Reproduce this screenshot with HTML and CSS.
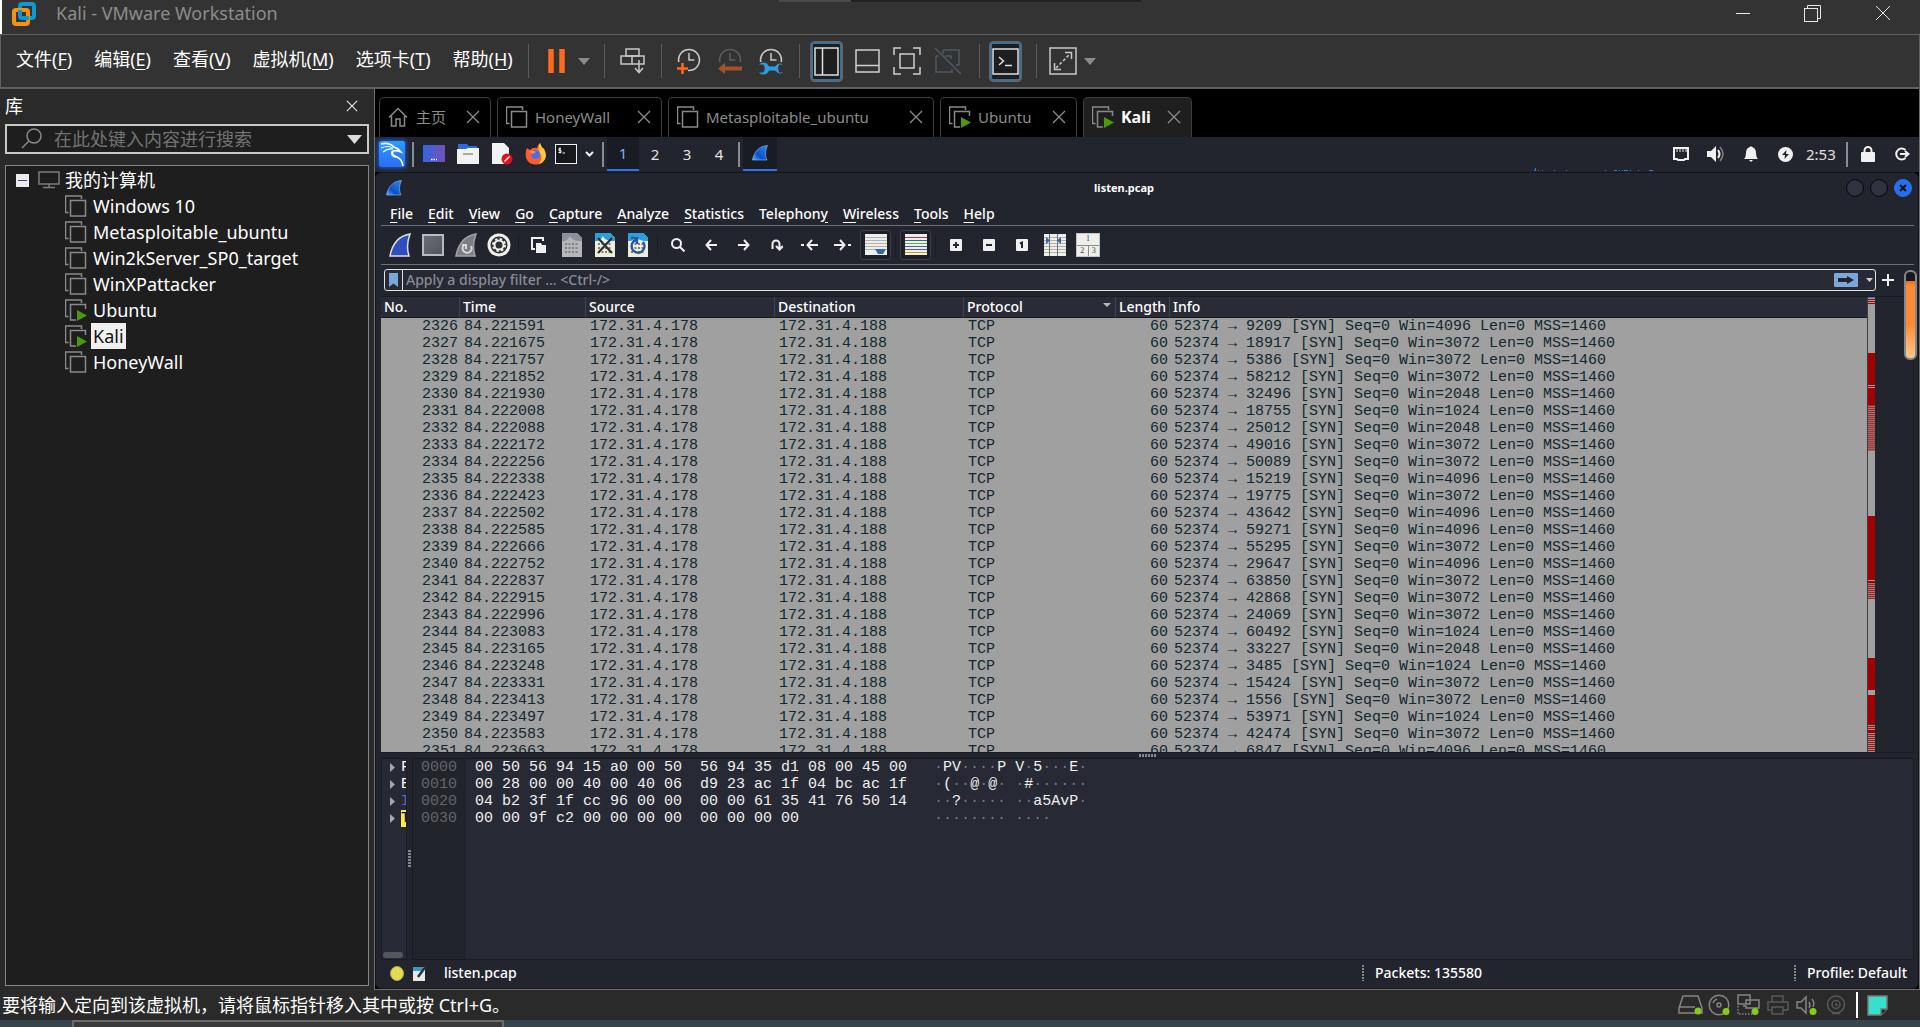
FILE: index.html
```html
<!DOCTYPE html>
<html lang="zh-CN">
<head>
<meta charset="utf-8">
<title>Kali - VMware Workstation</title>
<link rel="stylesheet" href="styles.css">
</head>
<body>
<svg class="defs" aria-hidden="true">
  <defs>
    <linearGradient id="finBlue" x1="0" y1="1" x2="1" y2="0"><stop offset="0" stop-color="#5aa8ff"/><stop offset=".35" stop-color="#0b50c8"/><stop offset="1" stop-color="#2a8cf0"/></linearGradient>
    <linearGradient id="purple" x1="0" y1="0" x2="1" y2="0"><stop offset="0" stop-color="#3566e0"/><stop offset="1" stop-color="#7350b8"/></linearGradient>
    <linearGradient id="grayBox" x1="0" y1="0" x2="1" y2="1"><stop offset="0" stop-color="#6b6d75"/><stop offset="1" stop-color="#53555c"/></linearGradient>
    <pattern id="stripe" width="7" height="2" patternUnits="userSpaceOnUse"><rect width="7" height="1" fill="#a40000"/><rect y="1" width="7" height="1" fill="#a0a0a0"/></pattern>
    <symbol id="vm" viewBox="0 0 22 22"><path d="M3.500 17.500H.5V1H16.500V4" fill="none" stroke="#8a8a8a" stroke-width="1.500"/><rect x="5.500" y="5.500" width="15" height="15.500" fill="none" stroke="#8a8a8a" stroke-width="1.500"/></symbol>
    <symbol id="vmOn" viewBox="0 0 22 22"><path d="M3.500 17.500H.5V1H16.500V4M11 21H5.500V5.500H20.500V10" fill="none" stroke="#8a8a8a" stroke-width="1.500"/><path d="M12 11 22 16.500 12 22Z" fill="#4a9a0c"/></symbol>
    <symbol id="x" viewBox="0 0 14 14"><path d="M1 1 13 13M13 1 1 13" fill="none" stroke="currentColor" stroke-width="1.300"/></symbol>
    <symbol id="fin" viewBox="0 0 16 16"><path d="M.5 15C2 7 7 1 15.500.500C13 6 13 11 15 15Z" fill="url(#finBlue)" stroke="#8cc0f4" stroke-width=".6"/></symbol>
    <symbol id="clock" viewBox="0 0 26 26"><circle cx="13" cy="13" r="10.500" fill="none" stroke="currentColor" stroke-width="1.500"/><path d="M13 6V13H18.500" fill="none" stroke="currentColor" stroke-width="1.500"/></symbol>
    <symbol id="doc" viewBox="0 0 20 24"><path d="M0 0H15L20 5V24H0Z" fill="var(--paper)"/><path d="M0 0H15L20 5V8H0Z" fill="var(--band)"/><path d="M3 8Q7 6 8 3Q9 7 16 8Z" fill="var(--paper)"/><path d="M3 11H17M3 15H17M3 19H17" stroke="#7e8084" stroke-width="2" stroke-dasharray="2 1.500"/></symbol>
  </defs>
</svg>

<header class="titlebar">
  <svg class="logo" width="24" height="24" viewBox="0 0 24 24" fill="none" stroke-width="4"><rect x="8" y="2" width="14" height="14" rx="2" stroke="#0e97d0"/><rect x="2" y="8" width="14" height="14" rx="2" stroke="#f49214"/><path d="M8 12V8M12 16H17" stroke="#0e97d0"/></svg>
  <h1>Kali - VMware Workstation</h1>
  <div class="topedge"></div>
  <div class="winbtns">
    <button aria-label="最小化"><svg width="18" height="18" viewBox="0 0 18 18"><path d="M2 9.500H16" stroke="#e8e8e8"/></svg></button>
    <button aria-label="还原"><svg width="18" height="18" viewBox="0 0 18 18" fill="none" stroke="#e8e8e8"><rect x=".5" y="4.500" width="13" height="13"/><path d="M3.500 4V1.500H16.500V14.500H14"/></svg></button>
    <button aria-label="关闭"><svg width="18" height="18" viewBox="0 0 18 18"><path d="M2 2 16 16M16 2 2 16" stroke="#e8e8e8"/></svg></button>
  </div>
</header>

<div class="menubar">
  <nav class="menus">
    <button>文件(<u>F</u>)</button><button>编辑(<u>E</u>)</button><button>查看(<u>V</u>)</button><button>虚拟机(<u>M</u>)</button><button>选项卡(<u>T</u>)</button><button>帮助(<u>H</u>)</button>
  </nav>
  <i class="vsep"></i>
  <div class="group g-pause">
    <button aria-label="挂起"><svg width="18" height="24"><path d="M3 0V24M14 0V24" stroke="#ff6a1c" stroke-width="5.500"/></svg></button>
    <button aria-label="电源选项"><svg width="12" height="7"><path d="M0 0H12L6 7Z" fill="#8c8c8c"/></svg></button>
  </div>
  <i class="vsep"></i>
  <div class="group g-one"><button aria-label="发送 Ctrl+Alt+Del"><svg width="26" height="26" viewBox="0 0 26 26" fill="none" stroke="#c8c8c8" stroke-width="1.500"><rect x="6" y="1" width="13" height="7"/><rect x="1" y="8" width="11" height="8"/><path d="M12 8H24V16H12M19 12V24M15 20 19 24.500 23 20"/></svg></button></div>
  <i class="vsep"></i>
  <div class="group g-clock">
    <button aria-label="拍摄快照"><svg width="26" height="28" viewBox="0 0 26 28"><use href="#clock" width="26" height="26" color="#c8c8c8"/><path d="M0 15H12V28H0Z" fill="#333"/><path d="M1 21.500H12M6.500 16V27" stroke="#ff6a1c" stroke-width="2.500"/></svg></button>
    <button aria-label="恢复快照"><svg width="26" height="28" viewBox="0 0 26 28"><use href="#clock" width="26" height="26" color="#5c5c5c"/><path d="M0 15H26V28H0Z" fill="#333"/><path d="M1 21.500 8 16V19.500H25V23.500H8V27Z" fill="#a5522a"/></svg></button>
    <button aria-label="管理快照"><svg width="26" height="28" viewBox="0 0 26 28"><use href="#clock" width="26" height="26" color="#c8c8c8"/><path d="M0 15H26V28H0Z" fill="#333"/><path d="M1 17.500H5.500L7 21.500 5.500 25.500H1Q4 29 9 26.500L11 23.500H17Q21 28 25 25.500H21L20 21.500 21 17.500H25Q21 15 17 19.500H11L9 16.500Q4 14 1 17.500Z" fill="#2e9de0"/></svg></button>
  </div>
  <i class="vsep"></i>
  <div class="group g-view">
    <button class="on" aria-label="显示库"><svg width="25" height="29" fill="none" stroke="#e0e0e0" stroke-width="1.500"><rect x="1" y="1" width="23" height="27"/><path d="M8.500 1V28"/></svg></button>
    <button aria-label="显示缩略图"><svg width="25" height="28" fill="none" stroke="#d0d0d0" stroke-width="1.500"><rect x="1" y="3" width="23" height="22"/><path d="M1 18.500H24"/></svg></button>
    <button aria-label="全屏"><svg width="28" height="28" fill="none" stroke="#d0d0d0" stroke-width="1.500"><path d="M8 1H1V8M20 1H27V8M1 20V27H8M27 20V27H20"/><rect x="7" y="7" width="14" height="14"/></svg></button>
    <button aria-label="Unity"><svg width="28" height="28" fill="none" stroke="#4c5a66" stroke-width="1.500"><path d="M1 1 27 27M9 3H25V18H22M2 9H5M11 9H17V12M2 9V25H18V22M9 3V7"/></svg></button>
  </div>
  <i class="vsep"></i>
  <div class="group g-console"><button class="on" aria-label="控制台"><svg width="27" height="27" fill="none" stroke="#e0e0e0" stroke-width="1.500"><rect x="1" y="1" width="25" height="25"/><path d="M7 9 11.500 13 7 17M13 17.500H20"/></svg></button></div>
  <i class="vsep"></i>
  <div class="group g-pause g-stretch">
    <button aria-label="拉伸"><svg width="28" height="28" fill="none" stroke="#c8c8c8" stroke-width="1.500"><rect x="1" y="1" width="26" height="26"/><path d="M16 5.500H22.500V12M5.500 16V22.500H12"/><path d="M7 21 21 7" stroke-dasharray="3 2"/></svg></button>
    <button aria-label="拉伸选项"><svg width="12" height="7"><path d="M0 0H12L6 7Z" fill="#8c8c8c"/></svg></button>
  </div>
</div>

<div class="body">
  <aside class="library">
    <div class="lib-head"><h2>库</h2><button aria-label="关闭库"><svg width="12" height="12" color="#e6e6e6"><use href="#x"/></svg></button></div>
    <div class="search">
      <svg width="22" height="22" viewBox="0 0 22 22" fill="none" stroke="#8a8a8a" stroke-width="1.500"><circle cx="13" cy="8" r="7"/><path d="M8 13 1 20"/></svg>
      <input type="text" aria-label="搜索" placeholder="在此处键入内容进行搜索">
      <button aria-label="筛选"><svg width="15" height="9"><path d="M0 0H15L7.500 9Z" fill="#dcdcdc"/></svg></button>
    </div>
    <ul class="tree">
      <li class="root"><svg width="13" height="13"><rect width="13" height="13" fill="#ececec"/><path d="M2 6.500H11" stroke="#3a4a90"/></svg><svg width="22" height="18" fill="none" stroke="#7c7c7c" stroke-width="1.500"><rect x="1" y="1" width="20" height="12"/><path d="M11 13V16M5 16.500H17"/></svg><span>我的计算机</span></li>
      <li><svg><use href="#vm"/></svg><span>Windows 10</span></li>
      <li><svg><use href="#vm"/></svg><span>Metasploitable_ubuntu</span></li>
      <li><svg><use href="#vm"/></svg><span>Win2kServer_SP0_target</span></li>
      <li><svg><use href="#vm"/></svg><span>WinXPattacker</span></li>
      <li><svg><use href="#vmOn"/></svg><span>Ubuntu</span></li>
      <li><svg><use href="#vmOn"/></svg><span class="sel">Kali</span></li>
      <li><svg><use href="#vm"/></svg><span>HoneyWall</span></li>
    </ul>
  </aside>

  <main class="stage">
    <div class="tabs">
      <div class="tab t-home"><svg width="20" height="20" viewBox="0 0 20 20" fill="none" stroke="#8a8a8a" stroke-width="1.500"><path d="M1 10.500 10 1.500 19 10.500M3.500 9V19H8V12H12V19H16.500V9"/></svg><span>主页</span><button aria-label="关闭"><svg><use href="#x"/></svg></button></div>
      <div class="tab t-honey"><svg><use href="#vm"/></svg><span>HoneyWall</span><button aria-label="关闭"><svg><use href="#x"/></svg></button></div>
      <div class="tab t-meta"><svg><use href="#vm"/></svg><span>Metasploitable_ubuntu</span><button aria-label="关闭"><svg><use href="#x"/></svg></button></div>
      <div class="tab t-ubuntu"><svg><use href="#vmOn"/></svg><span>Ubuntu</span><button aria-label="关闭"><svg><use href="#x"/></svg></button></div>
      <div class="tab active"><svg><use href="#vmOn"/></svg><span>Kali</span><button aria-label="关闭"><svg><use href="#x"/></svg></button></div>
    </div>

    <div class="panel">
      <button class="kali" aria-label="Kali"><svg width="26" height="26" viewBox="0 0 26 26" fill="none" stroke="#fff"><path d="M2 3Q10 1 15 6Q19 7 22 11Q17 9 14 10Q12 14 18 16Q23 18 24 25" stroke-width="1.600"/><path d="M2 7Q9 4 14 7M4 11Q9 7 14 8M13 10Q11 15 17 16.500" stroke-width="1.200"/></svg></button>
      <i class="psep"></i>
      <div class="launch">
        <button aria-label="桌面"><svg width="22" height="18"><rect width="22" height="17" fill="url(#purple)"/><path d="M8 14.500H14" stroke="#fff" stroke-width="1.500" stroke-dasharray="1.500 1"/></svg></button>
        <button aria-label="文件"><svg width="22" height="20"><path d="M1 0H10L12 2H20V8H1Z" fill="#2a6ae0"/><path d="M0 5H9L11 4H22V20H0Z" fill="#f2f2f2"/><path d="M6 10H16" stroke="#a8a8a8" stroke-width="2"/></svg></button>
        <button aria-label="编辑器"><svg width="22" height="22"><path d="M1 0H13L18 5V21H1Z" fill="#f2f2f2"/><circle cx="16" cy="16" r="5.500" fill="#d8141c"/><path d="M13.500 18.500 18.500 13.500" stroke="#fff" stroke-width="1.500"/></svg></button>
        <button aria-label="Firefox"><svg width="22" height="22" viewBox="0 0 22 22"><path d="M2 5 5 7Q8 4 12 5Q12 2 15 0Q16 4 19 6Q22 12 20 16A10.500 10.500 0 0 1 1 15Q0 9 2 5Z" fill="#ff5a30"/><path d="M15 0Q16 4 19 6Q22 12 20 16Q18 20 14 21Q18 15 15 10Q12 6 15 0Z" fill="#ffc83a"/><circle cx="10.500" cy="11.500" r="4.500" fill="#4a6cf0"/><path d="M4 8Q8 7 11 9L7 11Z" fill="#ff9a2c"/></svg></button>
        <button aria-label="终端"><svg width="22" height="20"><rect x=".5" y=".5" width="21" height="19" fill="#16181a" stroke="#f0f0f0"/><path d="M6 4.500H4V6.500H6V8.500H3.500M5 3.500V9.500M7.500 9H10" fill="none" stroke="#f0f0f0"/></svg></button>
      </div>
      <button class="chev" aria-label="更多终端"><svg width="9" height="6"><path d="M1 1 4.500 4.500 8 1" fill="none" stroke="#f0f0f0" stroke-width="2"/></svg></button>
      <i class="psep"></i>
      <div class="spaces"><button class="cur">1</button><button>2</button><button>3</button><button>4</button></div>
      <i class="psep"></i>
      <button class="task" aria-label="Wireshark"><svg width="16" height="16"><use href="#fin"/></svg></button>
      <svg class="graph" width="120" height="3" fill="#2c74e8"><path d="M1 0h1v3H0V2h1zM4 2h1v1h-1zM8 2h1v1h-1zM20 2h1v1h-1zM32 2h1v1h-1zM71 2h1v1h-1zM80 2h3v1h-3zM85 2h1v1h-1zM88 2h1v1h-1zM90 2h4v1h-4zM96 2h1v1h-1zM104 2h1v1h-1zM115 2h4v1h-4z"/></svg>
      <div class="tray">
        <button aria-label="网络"><svg width="16" height="14" fill="none" stroke="#f0f0f0" stroke-width="2"><path d="M1 1H15V12H12L11 13H5L4 12H1Z"/><path d="M4 5V2M7 5V2M10 5V2M13 5V2" stroke-width="1"/></svg></button>
        <button aria-label="音量"><svg width="18" height="16" fill="none"><path d="M0 5H4L9 0V16L4 11H0Z" fill="#f0f0f0"/><path d="M11 4Q14 8 11 12" stroke="#f0f0f0" stroke-width="2"/><path d="M13 1Q19 8 13 15" stroke="#808080" stroke-width="1.500"/></svg></button>
        <button aria-label="通知"><svg width="14" height="16" fill="#f0f0f0"><path d="M7 0 8 1Q12 2 12 7Q12 11 14 13H0Q2 11 2 7Q2 2 6 1ZM5 14H9L7 16Z"/></svg></button>
        <button aria-label="电源"><svg width="15" height="15"><circle cx="7.500" cy="7.500" r="7.500" fill="#f0f0f0"/><path d="M8.500 3 4 8H7L6.500 12 11 7H8Z" fill="#23252e"/></svg></button>
      </div>
      <time>2:53</time>
      <i class="psep"></i>
      <div class="tray2">
        <button aria-label="锁定"><svg width="14" height="16"><rect y="6" width="14" height="10" rx="1" fill="#f0f0f0"/><path d="M3.500 7V4.500A3.500 3.500 0 0 1 10.500 4.500V7" fill="none" stroke="#f0f0f0" stroke-width="2"/></svg></button>
        <button aria-label="注销"><svg width="15" height="14" fill="none" stroke="#f0f0f0" stroke-width="2"><path d="M10.500 3A5.500 5.500 0 1 0 10.500 11"/><path d="M5 7H13M10 4 13.500 7 10 10"/></svg></button>
      </div>
    </div>

    <section class="shark">
      <div class="shark-title">
        <svg width="16" height="16"><use href="#fin"/></svg>
        <h2>listen.pcap</h2>
        <button aria-label="Minimize"></button><button aria-label="Maximize"></button><button class="shut" aria-label="Close"><svg width="8" height="8"><path d="M1 1 7 7M7 1 1 7" stroke="#10131c" stroke-width="2.200"/></svg></button>
      </div>
      <nav class="shark-menu"><button><u>F</u>ile</button><button><u>E</u>dit</button><button><u>V</u>iew</button><button><u>G</u>o</button><button><u>C</u>apture</button><button><u>A</u>nalyze</button><button><u>S</u>tatistics</button><button>Telephon<u>y</u></button><button><u>W</u>ireless</button><button><u>T</u>ools</button><button><u>H</u>elp</button></nav>
      <div class="shark-tools">
        <button aria-label="Start capture"><svg width="22" height="24"><path d="M1 23C3 12 9 3 21 1C18 9 18 17 20 23Z" fill="#2f4fc0" stroke="#e0e0e0" stroke-width="1.500"/></svg></button>
        <button aria-label="Stop capture"><svg width="22" height="22"><rect x="1" y="1" width="20" height="20" fill="url(#grayBox)" stroke="#b8bac2" stroke-width="2"/></svg></button>
        <button aria-label="Restart capture"><svg width="22" height="24" fill="none"><path d="M1 23C3 12 9 3 21 1C18 9 18 17 20 23Z" fill="#7c7e84" stroke="#a0a2a8" stroke-width="1.500"/><path d="M9 12A4.500 4.500 0 1 0 16 13M7 12H11V16" stroke="#d8d8d8" stroke-width="2"/></svg></button>
        <button aria-label="Capture options"><svg width="24" height="24" fill="none"><circle cx="12" cy="12" r="11.500" fill="#efefec"/><circle cx="12" cy="12" r="8.500" fill="#2e3036"/><circle cx="12" cy="12" r="4.500" stroke="#efefec" stroke-width="2"/><circle cx="12" cy="12" r="6" stroke="#efefec" stroke-width="2" stroke-dasharray="2.400 2.310"/></svg></button>
        <i></i>
        <button aria-label="Open"><svg width="15" height="16" fill="none"><path d="M4 12H1V1H12V4" stroke="#f0f0f0" stroke-width="2"/><path d="M5 6H10L11 8H15V16H5Z" fill="#f0f0f0"/></svg></button>
        <button aria-label="Save" class="dim"><svg width="20" height="24"><use href="#doc"/></svg></button>
        <button aria-label="Close file"><svg width="20" height="24"><use href="#doc"/><path d="M3 5 17 20M17 5 3 20" stroke="#2c3036" stroke-width="2.200"/></svg></button>
        <button aria-label="Reload"><svg width="20" height="24" fill="none"><use href="#doc"/><path d="M8 7A6.500 6.500 0 1 0 15 9M3 5H9V11" stroke="#2458a8" stroke-width="2.400"/></svg></button>
        <i></i>
        <button aria-label="Find"><svg width="14" height="14" fill="none" stroke="#f0f0f0" stroke-width="2"><circle cx="5.500" cy="5.500" r="4.500"/><path d="M9 9 13.500 13.500"/></svg></button>
        <button aria-label="Back"><svg width="12" height="12" fill="none" stroke="#f0f0f0" stroke-width="2"><path d="M12 6H1.500M6 1 1.500 6 6 11"/></svg></button>
        <button aria-label="Forward"><svg width="12" height="12" fill="none" stroke="#f0f0f0" stroke-width="2"><path d="M0 6H10.500M6 1 10.500 6 6 11"/></svg></button>
        <button aria-label="Go to packet"><svg width="12" height="12" fill="none" stroke="#f0f0f0" stroke-width="2"><path d="M1.500 10V5A3.500 3.500 0 0 1 8.500 5V10M5 7 8.500 10.500 12 7"/></svg></button>
        <button aria-label="First packet"><svg width="17" height="12" fill="none" stroke="#f0f0f0" stroke-width="2"><path d="M17 6H6.500M11 1 6.500 6 11 11M0 6H3"/></svg></button>
        <button aria-label="Last packet"><svg width="17" height="12" fill="none" stroke="#f0f0f0" stroke-width="2"><path d="M0 6H10.500M6 1 10.500 6 6 11M14 6H17"/></svg></button>
        <button class="boxed" aria-label="Auto scroll"><svg width="22" height="22"><rect width="22" height="21" fill="#eeeeec"/><path d="M0 3.500H22M0 6.500H22M0 9.500H22M0 12.500H22M0 15.500H22" stroke="#b0b0ac"/><path d="M10 15H21L18 20H13Z" fill="#3465a4"/></svg></button>
        <i></i>
        <button class="boxed" aria-label="Colorize"><svg width="22" height="22"><rect width="22" height="21" fill="#eeeeec"/><path d="M0 3.500H22" stroke="#e02c2c"/><path d="M0 6.500H22M0 12.500H22" stroke="#3465a4"/><path d="M0 9.500H22" stroke="#5cb81c"/><path d="M0 15.500H22" stroke="#75507b"/><path d="M0 18.500H22" stroke="#c4a000"/></svg></button>
        <i></i>
        <button aria-label="Zoom in"><svg width="12" height="12"><rect width="12" height="12" rx="1" fill="#f0f0ee"/><path d="M3 6H9M6 3V9" stroke="#23252e" stroke-width="2"/></svg></button>
        <button aria-label="Zoom out"><svg width="12" height="12"><rect width="12" height="12" rx="1" fill="#f0f0ee"/><path d="M3 6H9" stroke="#23252e" stroke-width="2"/></svg></button>
        <button aria-label="Normal size"><svg width="12" height="12"><rect width="12" height="12" rx="1" fill="#f0f0ee"/><path d="M4 4.500 6 3.500V9" fill="none" stroke="#23252e" stroke-width="2"/></svg></button>
        <button aria-label="Resize columns"><svg width="22" height="22"><rect width="22" height="22" fill="#eeeeec"/><path d="M0 3.500H22M0 6.500H22M0 9.500H22M0 12.500H22M0 15.500H22M0 18.500H22" stroke="#b0b0ac"/><path d="M5.500 0V22M13.500 0V22" stroke="#70706c"/><path d="M2 3 6 6.500 2 10ZM17 3 13 6.500 17 10Z" fill="#3465a4"/></svg></button>
        <button aria-label="Layout" class="lay"><span>1</span><span>2</span><span>3</span></button>
      </div>
      <div class="filter">
        <div class="filter-box">
          <button class="mark" aria-label="Bookmarks"><svg width="9" height="14"><path d="M0 0H9V14L4.500 10.500 0 14Z" fill="#7ba6da"/></svg></button>
          <input type="text" aria-label="Display filter" placeholder="Apply a display filter … &lt;Ctrl-/&gt;">
          <button class="go" aria-label="Apply"><svg width="24" height="14"><rect width="24" height="14" rx="1" fill="#7ba6da"/><path d="M4 5H13V3L20 7 13 11V9H4Z" fill="#23252e"/></svg></button>
          <button class="drop" aria-label="Recent filters"><svg width="7" height="4"><path d="M0 0H7L3.500 4Z" fill="#d0d0d0"/></svg></button>
        </div>
        <button class="plus" aria-label="Add filter"><svg width="12" height="12"><path d="M0 6H12M6 0V12" stroke="#f0f0f0" stroke-width="2"/></svg></button>
      </div>
      <div class="panes">
        <div class="packets">
          <div class="list">
            <table>
              <colgroup><col class="c-no"><col class="c-time"><col class="c-addr"><col class="c-addr"><col class="c-proto"><col class="c-len"><col></colgroup>
              <thead><tr><th>No.</th><th>Time</th><th>Source</th><th>Destination</th><th><div class="sorted">Protocol<svg width="8" height="4"><path d="M0 0H8L4 4Z" fill="#b8b8b8"/></svg></div></th><th>Length</th><th>Info</th></tr></thead>
              <tbody>
<tr><td>2326</td><td>84.221591</td><td>172.31.4.178</td><td>172.31.4.188</td><td>TCP</td><td>60</td><td>52374 → 9209 [SYN] Seq=0 Win=4096 Len=0 MSS=1460</td></tr>
<tr><td>2327</td><td>84.221675</td><td>172.31.4.178</td><td>172.31.4.188</td><td>TCP</td><td>60</td><td>52374 → 18917 [SYN] Seq=0 Win=3072 Len=0 MSS=1460</td></tr>
<tr><td>2328</td><td>84.221757</td><td>172.31.4.178</td><td>172.31.4.188</td><td>TCP</td><td>60</td><td>52374 → 5386 [SYN] Seq=0 Win=3072 Len=0 MSS=1460</td></tr>
<tr><td>2329</td><td>84.221852</td><td>172.31.4.178</td><td>172.31.4.188</td><td>TCP</td><td>60</td><td>52374 → 58212 [SYN] Seq=0 Win=3072 Len=0 MSS=1460</td></tr>
<tr><td>2330</td><td>84.221930</td><td>172.31.4.178</td><td>172.31.4.188</td><td>TCP</td><td>60</td><td>52374 → 32496 [SYN] Seq=0 Win=2048 Len=0 MSS=1460</td></tr>
<tr><td>2331</td><td>84.222008</td><td>172.31.4.178</td><td>172.31.4.188</td><td>TCP</td><td>60</td><td>52374 → 18755 [SYN] Seq=0 Win=1024 Len=0 MSS=1460</td></tr>
<tr><td>2332</td><td>84.222088</td><td>172.31.4.178</td><td>172.31.4.188</td><td>TCP</td><td>60</td><td>52374 → 25012 [SYN] Seq=0 Win=2048 Len=0 MSS=1460</td></tr>
<tr><td>2333</td><td>84.222172</td><td>172.31.4.178</td><td>172.31.4.188</td><td>TCP</td><td>60</td><td>52374 → 49016 [SYN] Seq=0 Win=3072 Len=0 MSS=1460</td></tr>
<tr><td>2334</td><td>84.222256</td><td>172.31.4.178</td><td>172.31.4.188</td><td>TCP</td><td>60</td><td>52374 → 50089 [SYN] Seq=0 Win=3072 Len=0 MSS=1460</td></tr>
<tr><td>2335</td><td>84.222338</td><td>172.31.4.178</td><td>172.31.4.188</td><td>TCP</td><td>60</td><td>52374 → 15219 [SYN] Seq=0 Win=4096 Len=0 MSS=1460</td></tr>
<tr><td>2336</td><td>84.222423</td><td>172.31.4.178</td><td>172.31.4.188</td><td>TCP</td><td>60</td><td>52374 → 19775 [SYN] Seq=0 Win=3072 Len=0 MSS=1460</td></tr>
<tr><td>2337</td><td>84.222502</td><td>172.31.4.178</td><td>172.31.4.188</td><td>TCP</td><td>60</td><td>52374 → 43642 [SYN] Seq=0 Win=4096 Len=0 MSS=1460</td></tr>
<tr><td>2338</td><td>84.222585</td><td>172.31.4.178</td><td>172.31.4.188</td><td>TCP</td><td>60</td><td>52374 → 59271 [SYN] Seq=0 Win=4096 Len=0 MSS=1460</td></tr>
<tr><td>2339</td><td>84.222666</td><td>172.31.4.178</td><td>172.31.4.188</td><td>TCP</td><td>60</td><td>52374 → 55295 [SYN] Seq=0 Win=3072 Len=0 MSS=1460</td></tr>
<tr><td>2340</td><td>84.222752</td><td>172.31.4.178</td><td>172.31.4.188</td><td>TCP</td><td>60</td><td>52374 → 29647 [SYN] Seq=0 Win=4096 Len=0 MSS=1460</td></tr>
<tr><td>2341</td><td>84.222837</td><td>172.31.4.178</td><td>172.31.4.188</td><td>TCP</td><td>60</td><td>52374 → 63850 [SYN] Seq=0 Win=3072 Len=0 MSS=1460</td></tr>
<tr><td>2342</td><td>84.222915</td><td>172.31.4.178</td><td>172.31.4.188</td><td>TCP</td><td>60</td><td>52374 → 42868 [SYN] Seq=0 Win=3072 Len=0 MSS=1460</td></tr>
<tr><td>2343</td><td>84.222996</td><td>172.31.4.178</td><td>172.31.4.188</td><td>TCP</td><td>60</td><td>52374 → 24069 [SYN] Seq=0 Win=3072 Len=0 MSS=1460</td></tr>
<tr><td>2344</td><td>84.223083</td><td>172.31.4.178</td><td>172.31.4.188</td><td>TCP</td><td>60</td><td>52374 → 60492 [SYN] Seq=0 Win=1024 Len=0 MSS=1460</td></tr>
<tr><td>2345</td><td>84.223165</td><td>172.31.4.178</td><td>172.31.4.188</td><td>TCP</td><td>60</td><td>52374 → 33227 [SYN] Seq=0 Win=2048 Len=0 MSS=1460</td></tr>
<tr><td>2346</td><td>84.223248</td><td>172.31.4.178</td><td>172.31.4.188</td><td>TCP</td><td>60</td><td>52374 → 3485 [SYN] Seq=0 Win=1024 Len=0 MSS=1460</td></tr>
<tr><td>2347</td><td>84.223331</td><td>172.31.4.178</td><td>172.31.4.188</td><td>TCP</td><td>60</td><td>52374 → 15424 [SYN] Seq=0 Win=3072 Len=0 MSS=1460</td></tr>
<tr><td>2348</td><td>84.223413</td><td>172.31.4.178</td><td>172.31.4.188</td><td>TCP</td><td>60</td><td>52374 → 1556 [SYN] Seq=0 Win=3072 Len=0 MSS=1460</td></tr>
<tr><td>2349</td><td>84.223497</td><td>172.31.4.178</td><td>172.31.4.188</td><td>TCP</td><td>60</td><td>52374 → 53971 [SYN] Seq=0 Win=1024 Len=0 MSS=1460</td></tr>
<tr><td>2350</td><td>84.223583</td><td>172.31.4.178</td><td>172.31.4.188</td><td>TCP</td><td>60</td><td>52374 → 42474 [SYN] Seq=0 Win=3072 Len=0 MSS=1460</td></tr>
<tr><td>2351</td><td>84.223663</td><td>172.31.4.178</td><td>172.31.4.188</td><td>TCP</td><td>60</td><td>52374 → 6847 [SYN] Seq=0 Win=4096 Len=0 MSS=1460</td></tr>
              </tbody>
            </table>
          </div>
          <svg class="minimap" width="7" height="456" viewBox="0 0 7 456" preserveAspectRatio="none" shape-rendering="crispEdges">
            <rect width="7" height="456" fill="#a0a0a0"/>
            <rect width="7" height="1" fill="#2a6ff0"/>
            <path d="M0 2H7V8H0ZM0 108H7V154H0ZM0 286H7V303H0ZM0 429H7V456H0Z" fill="url(#stripe)"/>
            <path d="M0 56H7V88H0ZM0 89H7V90H0ZM0 91H7V108H0ZM0 220H7V284H0ZM0 285H7V287H0ZM0 362H7V394H0ZM0 399H7V429H0ZM0 434H7V437H0Z" fill="#a40000"/>
          </svg>
        </div>
        <div class="split-h"><i></i></div>
        <div class="lower">
          <div class="details">
            <div class="d-row"><svg width="5" height="9"><path d="M0 0 5 4.500 0 9Z" fill="#a8a8a8"/></svg><span>F</span></div>
            <div class="d-row"><svg width="5" height="9"><path d="M0 0 5 4.500 0 9Z" fill="#a8a8a8"/></svg><span>E</span></div>
            <div class="d-row"><svg width="5" height="9"><path d="M0 0 5 4.500 0 9Z" fill="#a8a8a8"/></svg><span class="mut">I</span></div>
            <div class="d-row"><svg width="5" height="9"><path d="M0 0 5 4.500 0 9Z" fill="#a8a8a8"/></svg><span class="hl">T</span></div>
            <div class="thumb"></div>
          </div>
          <div class="split-v"><i></i></div>
          <div class="hex">
            <pre class="offs">0000
0010
0020
0030</pre>
            <pre>00 50 56 94 15 a0 00 50  56 94 35 d1 08 00 45 00
00 28 00 00 40 00 40 06  d9 23 ac 1f 04 bc ac 1f
04 b2 3f 1f cc 96 00 00  00 00 61 35 41 76 50 14
00 00 9f c2 00 00 00 00  00 00 00 00</pre>
            <pre><s>·</s>PV<s>····</s>P V<s>·</s>5<s>···</s>E<s>·</s>
<s>·</s>(<s>··</s>@<s>·</s>@<s>·</s> <s>·</s>#<s>······</s>
<s>··</s>?<s>·····</s> <s>··</s>a5AvP<s>·</s>
<s>········ ····</s></pre>
          </div>
        </div>
      </div>
      <footer class="shark-status">
        <svg width="14" height="15"><ellipse cx="7" cy="7.500" rx="6.500" ry="7" fill="#e2dd50" stroke="#b0ac48"/></svg>
        <svg width="14" height="15"><rect y="1" width="12" height="14" fill="#e8e8e4"/><rect y="1" width="10" height="4" fill="#3a98d0"/><path d="M5 11 13 0" stroke="#303030" stroke-width="2.500"/></svg>
        <span class="file">listen.pcap</span>
        <span class="count">Packets: 135580</span>
        <span class="profile">Profile: Default</span>
      </footer>
      <div class="glow" aria-hidden="true"></div>
    </section>
  </main>
</div>

<footer class="vmstatus">
  <p>要将输入定向到该虚拟机，请将鼠标指针移入其中或按 Ctrl+G。</p>
  <div class="devices">
    <button aria-label="硬盘"><svg width="26" height="22" fill="none" stroke="#858585" stroke-width="1.500"><path d="M1 14 5 2H20L24 14V19H1ZM1 13H17"/><circle cx="20" cy="17" r="3.500" fill="#84cc16" stroke="none"/></svg></button>
    <button aria-label="光驱"><svg width="24" height="22" fill="none" stroke="#858585" stroke-width="1.500"><circle cx="11" cy="11" r="9.800"/><circle cx="11" cy="11" r="2"/><path d="M5 9Q6 6 9 5"/><circle cx="18" cy="17.500" r="3.500" fill="#84cc16" stroke="none"/></svg></button>
    <button aria-label="网络适配器"><svg width="24" height="22" fill="none" stroke="#858585" stroke-width="1.500"><rect x="1" y="1" width="12" height="9"/><path d="M9 10V6H22V14H9V12H6"/><path d="M1 12V20H15" stroke-dasharray="1.500 1.500"/><circle cx="18" cy="17.500" r="3.500" fill="#84cc16" stroke="none"/></svg></button>
    <button aria-label="打印机"><svg width="24" height="22" fill="none" stroke="#585858" stroke-width="1.500"><path d="M6 8V2H17V8M6 16H2V8H22V16H17M6 13H17V20H6Z"/></svg></button>
    <button aria-label="声卡"><svg width="24" height="22" fill="none" stroke="#858585" stroke-width="1.500"><path d="M2 8H6L11 3V19L6 14H2ZM14 8Q16 11 14 14M17 5Q20 9 18 13"/><circle cx="18" cy="17.500" r="3.500" fill="#84cc16" stroke="none"/></svg></button>
    <button aria-label="摄像头"><svg width="24" height="22" fill="none" stroke="#585858" stroke-width="1.500"><circle cx="12" cy="10.500" r="8.500"/><circle cx="12" cy="10.500" r="4"/><path d="M12 9V11H14M8 19.500H16"/></svg></button>
  </div>
  <i class="bar"></i>
  <button aria-label="便笺"><svg width="21" height="21"><path d="M1 1H20V14L14 20H1Z" fill="#38e0cc" stroke="#787878" stroke-width="1.500"/><path d="M20 14H14V20" fill="#2a2a2a" stroke="#787878" stroke-width="1.500"/></svg></button>
</footer>
<div class="desk"><div class="desk-win"></div></div>
</body>
</html>
```
FILE: styles.css
```css
* { box-sizing: border-box; }
body {
  margin: 0;
  height: 100vh;
  display: flex;
  flex-direction: column;
  overflow: hidden;
  background: #2a2a2a;
  color: #fff;
  font: 18px/26px "Noto Sans", "Noto Sans CJK SC", sans-serif;
}
button {
  padding: 0;
  border: 0;
  background: none;
  color: inherit;
  font: inherit;
  display: flex;
  align-items: center;
  justify-content: center;
}
input { border: 0; padding: 0; background: none; color: #fff; font: inherit; min-width: 0; flex: 1; outline: 0; }
h1, h2, p, ul, pre { margin: 0; padding: 0; font-weight: 400; }
svg { flex: none; display: block; }
.defs { position: absolute; width: 0; height: 0; }

/* VMware title bar */
.titlebar {
  flex: none;
  height: 34px;
  display: flex;
  background: #333;
  border-left: 2px solid #fff;
  padding-left: 10px;
}
.logo { margin-top: 2px; }
.titlebar h1 { margin-left: 20px; font-size: 18px; line-height: 27px; color: #8c8c8c; }
.topedge { position: absolute; left: 779px; width: 362px; height: 2px; background: linear-gradient(90deg, #4a4a4a 20%, #222 20%); }
.winbtns { margin-left: auto; display: flex; height: 26px; padding-right: 2px; }
.winbtns button { width: 70px; }

/* VMware menu and toolbar */
.menubar {
  flex: none;
  height: 55px;
  display: flex;
  align-items: center;
  background: #333;
  border: 1px solid #606060;
  border-bottom-width: 2px;
  padding-left: 15px;
}
.menus { display: flex; gap: 22px; width: 512px; padding-bottom: 4px; white-space: nowrap; }
.menus button, .shark-menu button { display: block; }
u { text-underline-offset: 3px; }
.vsep { width: 1px; height: 34px; background: #5c5c5c; flex: none; }
.group { display: flex; align-items: center; }
.g-pause { width: 75px; padding-left: 14px; gap: 7px; }
.g-stretch { padding-left: 12px; }
.g-pause button:first-child { min-width: 28px; }
.g-one { width: 56px; justify-content: center; }
.g-console { width: 56px; padding-left: 10px; }
.g-clock { width: 137px; padding-left: 14px; gap: 15px; }
.g-view { width: 179px; padding-left: 11px; gap: 13px; }
.group .on {
  width: 31px;
  height: 39px;
  background: #1e1e1e;
  border: 2px solid #3f6f94;
  outline: 1px solid #666;
  border-radius: 3px;
}

/* Library */
.body { flex: 1; min-height: 0; display: flex; }
.library { flex: none; width: 374px; padding: 3px 5px 4px; display: flex; flex-direction: column; }
.lib-head { display: flex; justify-content: space-between; align-items: center; height: 27px; padding-right: 11px; margin-bottom: 5px; }
.lib-head h2 { font-size: 18px; }
.search {
  height: 30px;
  flex: none;
  display: flex;
  align-items: center;
  background: #1e1e1e;
  border: 2px solid #c8c8c8;
  padding: 0 5px 0 14px;
}
.search input { margin-left: 11px; }
.search input::placeholder { color: #737373; opacity: 1; }
.tree { list-style: none; flex: 1; margin-top: 11px; padding: 1px 0 0; background: #1e1e1e; border: 1px solid #82868f; }
.tree li { display: flex; align-items: center; height: 26px; padding-left: 59px; gap: 4px; }
.tree li svg:not([height]) { width: 22px; height: 22px; }
.tree .root { padding-left: 10px; gap: 9px; }
.tree .root span { padding: 0; margin-left: -4px; }
.tree span { padding: 0 2px; }
.tree .sel { background: #f0f0f0; color: #111; }

/* Virtual machine tabs */
.stage { flex: 1; min-width: 0; display: flex; flex-direction: column; border: solid #707070; border-width: 0 1px 1px; background: #000; }
.tabs { flex: none; height: 48px; padding: 8px 0 0 4px; display: flex; gap: 6px; font-size: 15px; color: #8c8c8c; }
.tab { display: flex; align-items: center; border: 1px solid #3e3e3e; border-bottom: 0; border-radius: 5px 5px 0 0; padding: 0 10px 1px 8px; }
.tab > svg:not([height]) { width: 22px; height: 22px; }
.tab button { margin-left: auto; }
.tab button svg { width: 14px; height: 14px; }
.tab span { margin-left: 7px; }
.t-home { width: 112px; }
.t-home span { margin-left: 8px; }
.t-honey { width: 165px; }
.t-meta { width: 266px; }
.t-ubuntu { width: 137px; }
.tab.active { width: 109px; background: #1f1f1f; font-size: 16px; font-weight: 700; }
.tab.active span { color: #fff; }

/* Kali top panel */
.panel {
  flex: none;
  height: 35px;
  display: flex;
  align-items: center;
  background: #23252e;
  padding: 0 0 1px 4px;
  font-size: 15px;
}
.kali { width: 26px; height: 26px; border-radius: 2px; background: linear-gradient(#2a9cff, #2a6cf8); box-shadow: 0 0 4px 1px #1c5cd0; }
.psep { flex: none; width: 2px; height: 25px; background: #8a8c92; }
.kali + .psep { margin-left: 7px; }
.launch { display: flex; margin-left: 3px; }
.launch button { width: 34px; }
.launch button:nth-child(4) { width: 33px; }
.launch button:nth-child(5) { width: 28px; }
.chev { width: 19px; }
.chev + .psep { margin: 0 3px; }
.spaces, .spaces button, .task { align-self: stretch; }
.spaces { display: flex; width: 129px; }
.spaces button { width: 32px; color: #e4e4e4; }
.spaces .cur, .task { background: #1a1c24; border-bottom: 2px solid #2a74f4; }
.spaces .cur { color: #78b4f0; }
.spaces + .psep { margin: 0 3px 0 2px; }
.task { width: 34px; }
.graph { margin-left: auto; align-self: flex-end; }
.tray { display: flex; margin-left: 9px; }
.tray button { width: 35px; }
time { margin-left: 3px; width: 40px; color: #e0e0e0; }
.tray2 { display: flex; margin-left: 3px; }
.tray2 button { width: 34px; }

/* Wireshark window */
.shark {
  position: relative;
  flex: 1;
  min-height: 0;
  display: flex;
  flex-direction: column;
  background: #23252e;
  border: 1px solid #14161c;
  border-radius: 6px;
  padding: 0 4px 0 5px;
  font-size: 14px;
  font-weight: 500;
  line-height: 20px;
}
.shark-title { flex: none; height: 29px; display: flex; align-items: center; gap: 6px; padding: 0 2px 0 5px; }
.shark-title h2 { flex: 1; text-align: center; font-size: 11px; font-weight: 700; }
.shark-title button { width: 18px; height: 18px; border-radius: 50%; border: 1px solid #05060a; background: #30333f; }
.shark-title .shut { background: #2670f0; border-color: #2670f0; }
.shark-menu { flex: none; height: 24px; display: flex; gap: 15px; padding-left: 9px; border-bottom: 1px solid #6e7078; }
.shark-tools { flex: none; height: 39px; display: flex; align-items: center; padding-left: 2px; border-bottom: 1px solid #6e7078; }
.shark-tools button { width: 33px; height: 30px; }
.shark-tools i { width: 1px; height: 20px; margin: 0 3px; background: #1b1d24; }
.shark-tools .boxed { width: 31px; margin: 0 1px; background: #1d1f27; border: 1px solid #3c3f49; border-radius: 3px; }
.shark-tools { --paper: #eeeed8; --band: #28a0dc; }
.dim { --paper: #b4b6ba; --band: #8c9098; }
.shark-tools .lay { width: 24px; height: 24px; margin-left: 5px; display: grid; grid-template-columns: 1fr 1fr; gap: 1px; background: #8c8c88; border: 1px solid #c4c4c0; font: 8px/10px "Liberation Serif", serif; color: #444; }
.lay span { background: #eeeeec; align-self: stretch; justify-self: stretch; }
.lay span:first-child { grid-column: span 2; }

.filter { flex: none; display: flex; align-items: center; height: 31px; padding: 0 0 1px 3px; margin-right: 14px; }
.filter-box { flex: 1; height: 22px; display: flex; align-items: stretch; border: 1px solid #e4e4de; border-radius: 3px; background: #272934; }
.mark { width: 18px; border-right: 1px solid #e4e4de; }
.filter input { padding-left: 3px; }
.filter input::placeholder { color: #8a8c94; opacity: 1; }
.go { width: 34px; }
.drop { width: 12px; }
.plus { width: 24px; }

/* Packet list, details and bytes */
.panes { flex: 1; min-height: 0; display: flex; flex-direction: column; }
.packets { flex: 9 1 0; min-height: 0; display: flex; border: 1px solid #1a1c24; border-left: 0; }
.list { flex: 1; overflow: hidden; background: #a0a0a0; border-right: 1px solid #3c3e44; }
table { width: 100%; table-layout: fixed; border-collapse: separate; border-spacing: 0; white-space: nowrap; }
.c-no { width: 79px; }
.c-time { width: 126px; }
.c-addr { width: 189px; }
.c-proto { width: 152px; }
.c-len { width: 54px; }
th { height: 21px; padding: 0 0 0 3px; text-align: left; font-weight: 500; background: #292c36; border-right: 1px solid #41444e; border-bottom: 1px solid #17191f; }
th:last-child { border-right: 0; }
.sorted { display: flex; justify-content: space-between; padding-right: 4px; }
.sorted svg { margin-top: 6px; }
td { height: 17px; padding: 0 0 0 4px; color: #12272e; font: 15px/17px "Liberation Mono", monospace; }
td:nth-child(1), td:nth-child(6) { text-align: right; padding: 0 2px 0 0; }
.minimap { width: 7px; height: 100%; margin-right: 38px; }
.split-h { flex: none; height: 5px; display: flex; justify-content: center; }
.split-h i { width: 17px; height: 3px; margin-top: 1px; background: repeating-linear-gradient(90deg, #858790 0 2px, transparent 2px 3px); }
.lower { flex: 4 1 0; min-height: 0; display: flex; }
.details { width: 26px; overflow: hidden; display: flex; flex-direction: column; background: #272934; border: 1px solid #1a1c24; font: 15px/17px "Liberation Mono", monospace; }
.d-row { display: flex; align-items: center; gap: 6px; height: 17px; flex: none; padding-left: 8px; }
.d-row span { height: 17px; }
.mut { color: #5c6cb0; }
.hl { background: #f4ee4c; color: #111; }
.thumb { width: 20px; height: 6px; margin: auto 0 1px 1px; border-radius: 3px; background: #55575e; }
.split-v { width: 5px; display: flex; align-items: center; justify-content: center; }
.split-v i { width: 3px; height: 17px; background: repeating-linear-gradient(#858790 0 2px, transparent 2px 3px); }
.hex { flex: 1; display: flex; background: #272934; border: 1px solid #1a1c24; }
.hex pre { font: 15px/17px "Liberation Mono", monospace; color: #f0f0f0; margin-left: 27px; }
.hex .offs { margin: 0; width: 53px; padding-left: 8px; background: #22242c; color: #62646c; }
.hex .offs + pre { margin-left: 9px; }
s { text-decoration: none; color: #75777f; }

.shark-status { flex: none; height: 28px; display: flex; align-items: center; padding: 0 7px 2px 9px; }
.shark-status svg + svg { margin-left: 9px; }
.shark-status span { display: flex; }
.file { margin-left: 17px; flex: 1; }
.count { width: 432px; }
.count::before, .profile::before { content: ""; width: 2px; height: 16px; margin: 2px 11px 0 0; background: repeating-linear-gradient(#858790 0 2px, transparent 2px 3px); }
.glow { position: absolute; top: 97px; right: 1px; width: 13px; height: 90px; border: 2px solid #85878d; border-radius: 6px; background: linear-gradient(#17191f 11%, #f07018 11%, #ff8a34 16%, #ff8a34 60%, #ffc888); }

/* VMware status bar and the desktop strip below the window */
.vmstatus { flex: none; height: 30px; display: flex; align-items: center; padding: 0 32px 0 2px; }
.vmstatus p { flex: 1; }
.devices { display: flex; }
.devices button { width: 29px; }
.bar { width: 2px; height: 26px; background: #fff; margin: 0 9px 0 6px; }
.desk { flex: none; height: 7px; background: #36444e; padding-left: 72px; }
.desk-win { width: 432px; height: 7px; background: #3a3a3a; border: 2px solid #6c6c6c; border-bottom: 0; }
```
